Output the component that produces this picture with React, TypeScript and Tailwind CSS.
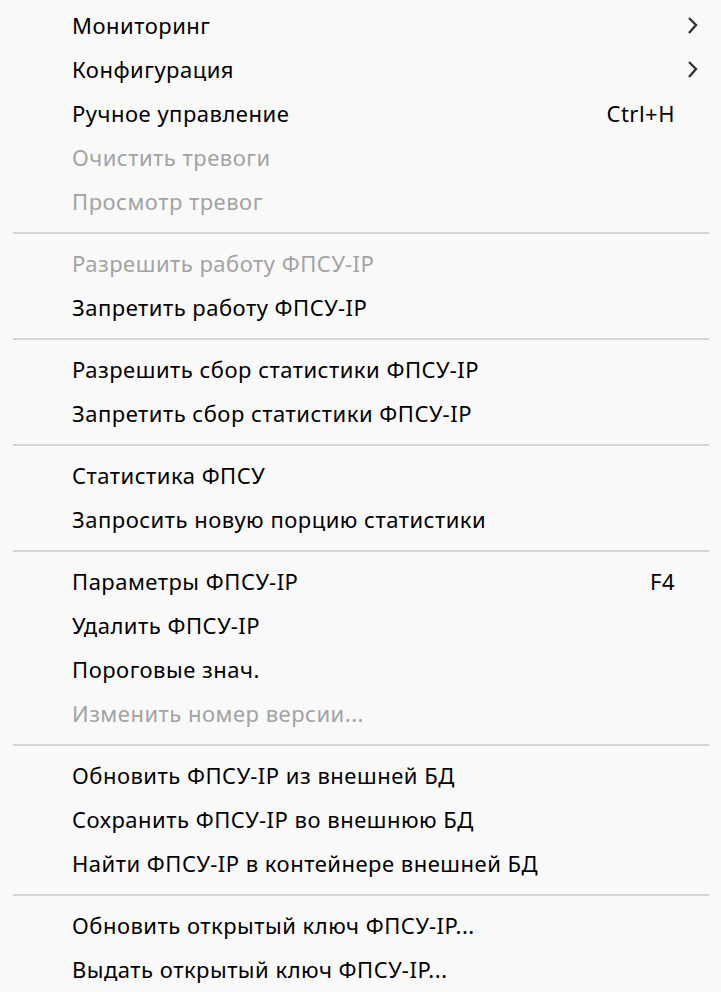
import React from "react";

type Item =
  | { type: "sep" }
  | { type: "item"; label: string; disabled?: boolean; shortcut?: string; sub?: boolean };

const items: Item[] = [
  { type: "item", label: "Мониторинг", sub: true },
  { type: "item", label: "Конфигурация", sub: true },
  { type: "item", label: "Ручное управление", shortcut: "Ctrl+H" },
  { type: "item", label: "Очистить тревоги", disabled: true },
  { type: "item", label: "Просмотр тревог", disabled: true },
  { type: "sep" },
  { type: "item", label: "Разрешить работу ФПСУ-IP", disabled: true },
  { type: "item", label: "Запретить работу ФПСУ-IP" },
  { type: "sep" },
  { type: "item", label: "Разрешить сбор статистики ФПСУ-IP" },
  { type: "item", label: "Запретить сбор статистики ФПСУ-IP" },
  { type: "sep" },
  { type: "item", label: "Статистика ФПСУ" },
  { type: "item", label: "Запросить новую порцию статистики" },
  { type: "sep" },
  { type: "item", label: "Параметры ФПСУ-IP", shortcut: "F4" },
  { type: "item", label: "Удалить ФПСУ-IP" },
  { type: "item", label: "Пороговые знач." },
  { type: "item", label: "Изменить номер версии...", disabled: true },
  { type: "sep" },
  { type: "item", label: "Обновить ФПСУ-IP из внешней БД" },
  { type: "item", label: "Сохранить ФПСУ-IP во внешнюю БД" },
  { type: "item", label: "Найти ФПСУ-IP в контейнере внешней БД" },
  { type: "sep" },
  { type: "item", label: "Обновить открытый ключ ФПСУ-IP..." },
  { type: "item", label: "Выдать открытый ключ ФПСУ-IP..." },
];

export default function App() {
  return (
    <div
      className="w-[721px] h-[992px] bg-[#f9f9f9] pt-[4px] overflow-hidden"
      style={{ fontFamily: '"Noto Sans", "Open Sans", sans-serif' }}
    >
      {items.map((it, i) =>
        it.type === "sep" ? (
          <div key={i} className="h-[18px] flex items-center">
            <div className="ml-[13px] mr-[12px] h-[2px] flex-1 bg-[#d5d5d5]" />
          </div>
        ) : (
          <div
            key={i}
            className={`h-[44px] flex items-center pl-[72px] text-[22px] tracking-[0.5px] leading-none ${
              it.disabled ? "text-[#a3a3a3]" : "text-black"
            }`}
          >
            <span className="flex-1 whitespace-nowrap mb-[2px]">{it.label}</span>
            {it.shortcut && (
              <span className="whitespace-nowrap mb-[2px]">{it.shortcut}</span>
            )}
            <span className="w-[46px] h-full flex items-center">
              {it.sub && (
                <svg width="12" height="20" viewBox="0 0 12 20" className="ml-[12px]">
                  <polyline
                    points="2,2 9,9 2,17"
                    fill="none"
                    stroke="#333"
                    strokeWidth="2.4"
                  />
                </svg>
              )}
            </span>
          </div>
        )
      )}
    </div>
  );
}
